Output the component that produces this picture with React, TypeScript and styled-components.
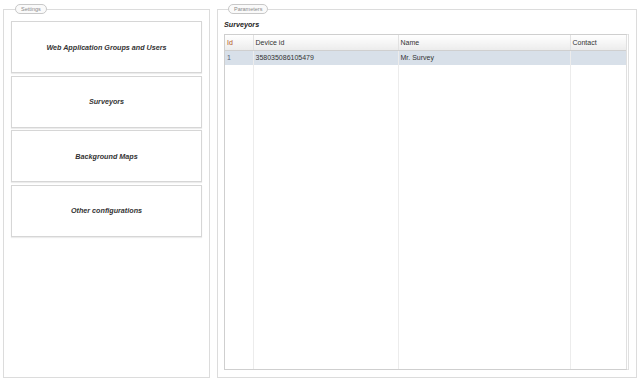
import React from "react";
import styled, { createGlobalStyle } from "styled-components";

const GlobalStyle = createGlobalStyle`
  html, body { margin: 0; padding: 0; background: #fff; }
  body { font-family: "Liberation Sans", Arial, sans-serif; }
`;

const settings = [
  "Web Application Groups and Users",
  "Surveyors",
  "Background Maps",
  "Other configurations",
];

const columns = [
  { key: "id", label: "Id", width: 28, sorted: true },
  { key: "device", label: "Device id", width: 145 },
  { key: "name", label: "Name", width: 172 },
  { key: "contact", label: "Contact", width: 0 },
];

const rows = [{ id: "1", device: "358035086105479", name: "Mr. Survey", contact: "" }];

const App: React.FC = () => (
  <Page>
    <GlobalStyle />
    <SettingsSet>
      <Legend>Settings</Legend>
      <ButtonList>
        {settings.map((s) => (
          <SettingButton key={s}>{s}</SettingButton>
        ))}
      </ButtonList>
    </SettingsSet>

    <ParamsSet>
      <Legend>Parameters</Legend>
      <PanelTitle>Surveyors</PanelTitle>
      <GridBox>
        <Grid>
          <colgroup>
            {columns.map((c) => (
              <col key={c.key} style={c.width ? { width: c.width } : undefined} />
            ))}
          </colgroup>
          <thead>
            <tr>
              {columns.map((c) => (
                <HeadCell key={c.key} $sorted={c.sorted}>{c.label}</HeadCell>
              ))}
            </tr>
          </thead>
          <tbody>
            {rows.map((r) => (
              <SelectedRow key={r.id}>
                <Cell $muted>{r.id}</Cell>
                <Cell>{r.device}</Cell>
                <Cell>{r.name}</Cell>
                <Cell>{r.contact}</Cell>
              </SelectedRow>
            ))}
            <FillerRow>
              {columns.map((c) => (
                <Cell key={c.key} />
              ))}
            </FillerRow>
          </tbody>
        </Grid>
      </GridBox>
    </ParamsSet>
  </Page>
);

export default App;

/* styles */

const Page = styled.div`
  width: 640px;
  height: 380px;
  box-sizing: border-box;
  padding: 4px 3px 2px 3px;
  display: flex;
  gap: 7px;
`;

const Fieldset = styled.fieldset`
  margin: 0;
  box-sizing: border-box;
  border: 1px solid #dcdcdc;
  min-width: 0;
`;

const SettingsSet = styled(Fieldset)`
  width: 207px;
  flex: none;
  padding: 7px 7px 0 7px;
`;

const ParamsSet = styled(Fieldset)`
  width: 420px;
  flex: none;
  padding: 2px 7px 7px 6px;
  display: flex;
  flex-direction: column;
`;

const Legend = styled.legend`
  margin-left: 4px;
  padding: 0 5px;
  height: 8px;
  line-height: 8px;
  font-size: 5.5px;
  color: #8a8a8a;
  border: 1px solid #c8c8c8;
  border-radius: 6px;
  background: #fafafa;
`;

const ButtonList = styled.div`
  display: flex;
  flex-direction: column;
  gap: 2.6px;
`;

const SettingButton = styled.div`
  box-sizing: border-box;
  height: 52px;
  display: flex;
  align-items: center;
  justify-content: center;
  border: 1px solid #d6d6d6;
  box-shadow: 0 1px 1px #ececec;
  font-size: 7.2px;
  font-weight: bold;
  font-style: italic;
  color: #333;
`;

const PanelTitle = styled.div`
  font-size: 7.2px;
  font-weight: bold;
  font-style: italic;
  color: #222;
  height: 14px;
  line-height: 12px;
  margin-top: 3px;
  margin-bottom: 1px;
`;

const GridBox = styled.div`
  flex: 1;
  border: 1px solid #cfcfcf;
  border-right: 3px double #e0e0e0;
`;

const Grid = styled.table`
  width: 100%;
  height: 100%;
  border-collapse: collapse;
  table-layout: fixed;
  font-size: 7px;
`;

const HeadCell = styled.th<{ $sorted?: boolean }>`
  height: 15px;
  padding: 0 2px;
  text-align: left;
  font-weight: normal;
  color: ${(p) => (p.$sorted ? "#b4561c" : "#333")};
  background: linear-gradient(#ffffff, #ececec);
  border-bottom: 1px solid #cfcfcf;
  border-right: 1px solid #e2e2e2;
  &:last-child { border-right: none; }
`;

const SelectedRow = styled.tr`
  height: 14px;
  background: #d8e0e9;
`;

const FillerRow = styled.tr``;

const Cell = styled.td<{ $muted?: boolean }>`
  padding: 0 2px;
  color: ${(p) => (p.$muted ? "#56607a" : "#333")};
  border-right: 1px solid #ececec;
  vertical-align: middle;
  &:last-child { border-right: none; }
`;
